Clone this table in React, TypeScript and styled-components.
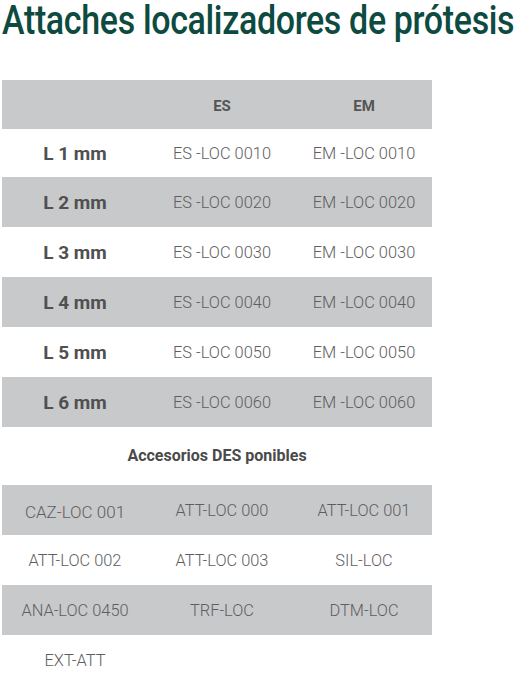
import React from 'react';
import styled, { createGlobalStyle } from 'styled-components';

const GlobalStyle = createGlobalStyle`
  * {
    margin: 0;
    padding: 0;
    box-sizing: border-box;
  }

  body {
    font-family: Roboto, 'Liberation Sans', sans-serif;
    background: #ffffff;
    color: #555555;
  }
`;

const Page = styled.div`
  width: 526px;
  padding-left: 2px;
`;

// narrow headline: smaller type stretched up to the cap height of the original
const Title = styled.h1`
  font-size: 34px;
  font-weight: 500;
  letter-spacing: -0.35px;
  color: #0d4a40;
  line-height: 40px;
  white-space: nowrap;
  transform: scaleY(1.176);
  transform-origin: left 20px;
`;

const Grid = styled.div`
  display: grid;
  grid-template-columns: 146px 148px 136px;
  width: 430px;
`;

const SizesGrid = styled(Grid)`
  margin-top: 40px;
`;

const Cell = styled.div<{ $shaded?: boolean; $h?: number }>`
  height: ${p => p.$h ?? 50}px;
  display: flex;
  align-items: center;
  justify-content: center;
  background: ${p => (p.$shaded ? '#c8c9cb' : 'transparent')};
`;

const HeadCell = styled(Cell)`
  font-size: 15px;
  font-weight: 700;
  color: #555555;
  padding-top: 2px;
`;

const SizeCell = styled(Cell)`
  font-size: 19px;
  font-weight: 700;
  color: #505050;
`;

const CodeCell = styled(Cell)<{ $big?: boolean }>`
  font-size: ${p => (p.$big ? '17px' : '16.4px')};
  font-weight: 300;
  color: #5e5e5e;
  padding-top: ${p => (p.$big ? '4px' : '0')};
`;

const SubHeading = styled.h2`
  width: 430px;
  text-align: center;
  font-size: 16px;
  font-weight: 700;
  color: #4a4a4a;
  padding: 20px 0 20px;
  line-height: 18px;
`;

const sizes = [1, 2, 3, 4, 5, 6];

const accessories: string[][] = [
  ['CAZ-LOC 001', 'ATT-LOC 000', 'ATT-LOC 001'],
  ['ATT-LOC 002', 'ATT-LOC 003', 'SIL-LOC'],
  ['ANA-LOC 0450', 'TRF-LOC', 'DTM-LOC'],
  ['EXT-ATT', '', ''],
];

const App: React.FC = () => {
  return (
    <Page>
      <GlobalStyle />
      <Title>Attaches localizadores de prótesis</Title>

      <SizesGrid>
        <HeadCell $shaded $h={49} />
        <HeadCell $shaded $h={49}>ES</HeadCell>
        <HeadCell $shaded $h={49}>EM</HeadCell>
        {sizes.map(n => {
          const shaded = n % 2 === 0;
          const h = n === 1 ? 48 : 50;
          return (
            <React.Fragment key={n}>
              <SizeCell $shaded={shaded} $h={h}>L {n} mm</SizeCell>
              <CodeCell $shaded={shaded} $h={h}>ES -LOC 00{n}0</CodeCell>
              <CodeCell $shaded={shaded} $h={h}>EM -LOC 00{n}0</CodeCell>
            </React.Fragment>
          );
        })}
      </SizesGrid>

      <SubHeading>Accesorios DES ponibles</SubHeading>

      <Grid>
        {accessories.map((row, i) =>
          row.map((code, j) => (
            <CodeCell key={`${i}-${j}`} $shaded={i % 2 === 0} $big={i === 0 && j === 0}>
              {code}
            </CodeCell>
          ))
        )}
      </Grid>
    </Page>
  );
};

export default App;
